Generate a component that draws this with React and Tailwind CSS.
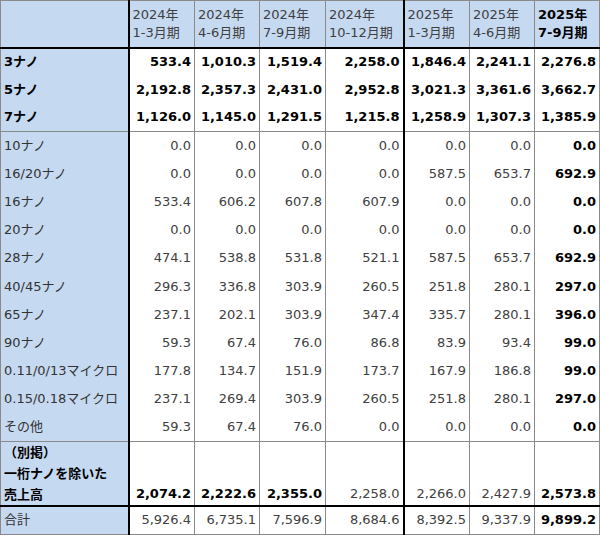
import React from 'react'

const cols = [
    ["2024年", "1-3月期"],
    ["2024年", "4-6月期"],
    ["2024年", "7-9月期"],
    ["2024年", "10-12月期"],
    ["2025年", "1-3月期"],
    ["2025年", "4-6月期"],
    ["2025年", "7-9月期"],
];

const widths = ["w-[128px]", "w-[66px]", "w-[65px]", "w-[66px]", "w-[78px]", "w-[66px]", "w-[65px]", "w-[65px]"];

const topRows = [
    ["3ナノ", ["533.4", "1,010.3", "1,519.4", "2,258.0", "1,846.4", "2,241.1", "2,276.8"]],
    ["5ナノ", ["2,192.8", "2,357.3", "2,431.0", "2,952.8", "3,021.3", "3,361.6", "3,662.7"]],
    ["7ナノ", ["1,126.0", "1,145.0", "1,291.5", "1,215.8", "1,258.9", "1,307.3", "1,385.9"]],
];

const midRows = [
    ["10ナノ", ["0.0", "0.0", "0.0", "0.0", "0.0", "0.0", "0.0"]],
    ["16/20ナノ", ["0.0", "0.0", "0.0", "0.0", "587.5", "653.7", "692.9"]],
    ["16ナノ", ["533.4", "606.2", "607.8", "607.9", "0.0", "0.0", "0.0"]],
    ["20ナノ", ["0.0", "0.0", "0.0", "0.0", "0.0", "0.0", "0.0"]],
    ["28ナノ", ["474.1", "538.8", "531.8", "521.1", "587.5", "653.7", "692.9"]],
    ["40/45ナノ", ["296.3", "336.8", "303.9", "260.5", "251.8", "280.1", "297.0"]],
    ["65ナノ", ["237.1", "202.1", "303.9", "347.4", "335.7", "280.1", "396.0"]],
    ["90ナノ", ["59.3", "67.4", "76.0", "86.8", "83.9", "93.4", "99.0"]],
    ["0.11/0/13マイクロ", ["177.8", "134.7", "151.9", "173.7", "167.9", "186.8", "99.0"]],
    ["0.15/0.18マイクロ", ["237.1", "269.4", "303.9", "260.5", "251.8", "280.1", "297.0"]],
    ["その他", ["59.3", "67.4", "76.0", "0.0", "0.0", "0.0", "0.0"]],
];

const exRow = [
    ["2,074.2", true], ["2,222.6", true], ["2,355.0", true], ["2,258.0", false],
    ["2,266.0", false], ["2,427.9", false], ["2,573.8", true],
];

const totals = ["5,926.4", "6,735.1", "7,596.9", "8,684.6", "8,392.5", "9,337.9", "9,899.2"];

// vertical line after the label column and after 2024 10-12
function sideBorder(i) {
    return i === 3 ? "border-r-2 border-r-black" : "border-r border-r-[#8a8a8a]";
}

function Num({ value, bold, i, extra = "" }) {
    return (
        <td className={`px-[3px] text-right whitespace-nowrap ${sideBorder(i)} ${bold ? "font-bold text-black" : "text-[#404040]"} ${extra}`}>
            {value}
        </td>
    );
}

export default function App() {
    const label = "bg-[#c5d9f1] px-[3px] text-left whitespace-nowrap border-r-2 border-r-black";
    return (
        <div className="bg-white w-[600px] h-[536px]" style={{ fontFamily: '"DejaVu Sans", "Noto Sans CJK JP", sans-serif' }}>
            <table className="table-fixed border-collapse text-[13px] leading-[18px] border border-[#8a8a8a]">
                <colgroup>
                    {widths.map((w, i) => <col key={i} className={w} />)}
                </colgroup>
                <thead>
                    <tr className="h-[47px] border-b-2 border-b-black">
                        <th className="bg-[#c5d9f1] border-r-2 border-r-black"></th>
                        {cols.map((c, i) => (
                            <th key={i} className={`bg-[#c5d9f1] px-[3px] text-left align-middle whitespace-nowrap ${sideBorder(i)} ${i === 6 ? "font-bold text-black" : "font-normal text-[#404040]"}`}>
                                <div>{c[0]}</div>
                                <div>{c[1]}</div>
                            </th>
                        ))}
                    </tr>
                </thead>
                <tbody>
                    {topRows.map(([name, vals], r) => (
                        <tr key={name} className={`h-[28px] ${r === 2 ? "border-b border-b-[#8a8a8a]" : ""}`}>
                            <td className={`${label} font-bold text-black`}>{name}</td>
                            {vals.map((v, i) => <Num key={i} value={v} bold i={i} />)}
                        </tr>
                    ))}
                    {midRows.map(([name, vals], r) => (
                        <tr key={name} className={`h-[28.2px] ${r === midRows.length - 1 ? "border-b border-b-[#8a8a8a]" : ""}`}>
                            <td className={`${label} text-[#333]`}>{name}</td>
                            {vals.map((v, i) => <Num key={i} value={v} bold={i === 6} i={i} />)}
                        </tr>
                    ))}
                    <tr className="h-[64px] border-b-2 border-b-black">
                        <td className={`${label} font-bold text-black leading-[21px] align-bottom`}>
                            <div>（別掲）</div>
                            <div>一桁ナノを除いた</div>
                            <div>売上高</div>
                        </td>
                        {exRow.map(([v, b], i) => <Num key={i} value={v} bold={b} i={i} extra="align-bottom pb-[2px]" />)}
                    </tr>
                    <tr className="h-[28px]">
                        <td className={`${label} text-[#333]`}>合計</td>
                        {totals.map((v, i) => <Num key={i} value={v} bold={i === 6} i={i} />)}
                    </tr>
                </tbody>
            </table>
        </div>
    );
}
